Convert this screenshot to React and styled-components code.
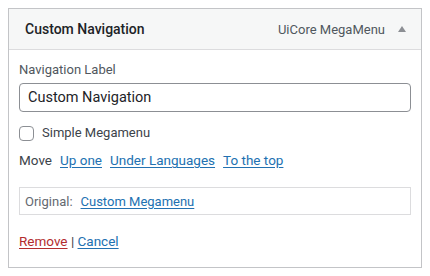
import React from "react";
import styled, { createGlobalStyle } from "styled-components";

const Global = createGlobalStyle`
  html, body { margin: 0; padding: 0; background: #fff; }
  body { font-family: Roboto, "Noto Sans", sans-serif; color: #3c434a; }
  * { box-sizing: border-box; }
`;

const Page = styled.div`
  padding: 8px 8px 0 8px;
`;

const Panel = styled.div`
  width: 414px;
  border: 1px solid #c3c4c7;
  background: #fff;
`;

const Header = styled.div`
  height: 41px;
  display: flex;
  align-items: center;
  background: #f6f7f7;
  border-bottom: 1px solid #dcdcde;
  padding: 0 15px 0 16px;
`;

const Title = styled.div`
  flex: 1;
  font-size: 14px;
  font-weight: 500;
  color: #1d2327;
`;

const Type = styled.div`
  font-size: 13px;
  color: #50575e;
`;

const Arrow = styled.span`
  margin-left: 13px;
  width: 0;
  height: 0;
  border-left: 4px solid transparent;
  border-right: 4px solid transparent;
  border-bottom: 6px solid #8c8f94;
`;

const Body = styled.div`
  padding: 12px 10px 18px 10px;
`;

const FieldLabel = styled.label`
  display: block;
  font-size: 13px;
  color: #50575e;
  line-height: 16px;
`;

const Input = styled.input`
  display: block;
  width: 100%;
  height: 29px;
  margin-top: 5px;
  padding: 0 8px;
  border: 1px solid #8c8f94;
  border-radius: 4px;
  font-family: inherit;
  font-size: 14.5px;
  color: #1d2327;
  outline: none;
`;

const CheckRow = styled.label`
  display: flex;
  align-items: center;
  margin-top: 13px;
  font-size: 13px;
  line-height: 16px;
  color: #3c434a;
`;

const Box = styled.span`
  width: 15px;
  height: 15px;
  border: 1px solid #8c8f94;
  border-radius: 4px;
  margin-right: 8px;
  background: #fff;
`;

const MoveRow = styled.div`
  display: flex;
  align-items: center;
  margin-top: 11px;
  font-size: 13.5px;
  line-height: 16px;
  gap: 8px;
`;

const Link = styled.a`
  color: ${(p) => (p.$danger ? "#b32d2e" : "#2271b1")};
  text-decoration: underline;
  text-underline-offset: 2px;
  cursor: pointer;
`;

const Original = styled.div`
  margin-top: 19px;
  border: 1px solid #dcdcde;
  height: 28px;
  display: flex;
  align-items: center;
  padding: 0 5px;
  font-size: 13px;
  color: #646970;
  gap: 8px;
`;

const Actions = styled.div`
  margin-top: 18px;
  font-size: 13.5px;
  line-height: 16px;
  color: #3c434a;
`;

export default function App() {
  return (
    <Page>
      <Global />
      <Panel>
        <Header>
          <Title>Custom Navigation</Title>
          <Type>UiCore MegaMenu</Type>
          <Arrow />
        </Header>
        <Body>
          <FieldLabel>Navigation Label</FieldLabel>
          <Input defaultValue="Custom Navigation" />
          <CheckRow>
            <Box />
            Simple Megamenu
          </CheckRow>
          <MoveRow>
            <span>Move</span>
            <Link>Up one</Link>
            <Link>Under Languages</Link>
            <Link>To the top</Link>
          </MoveRow>
          <Original>
            <span>Original:</span>
            <Link>Custom Megamenu</Link>
          </Original>
          <Actions>
            <Link $danger>Remove</Link> | <Link>Cancel</Link>
          </Actions>
        </Body>
      </Panel>
    </Page>
  );
}
